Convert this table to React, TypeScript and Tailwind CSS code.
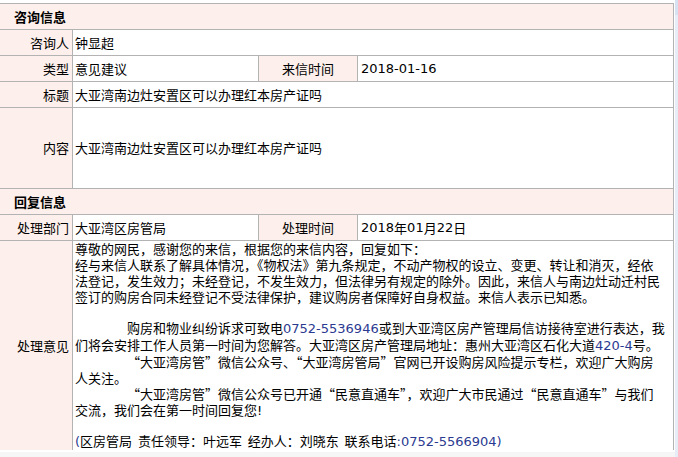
import React from "react";

const N = ({ children }: { children: React.ReactNode }) => (
  <span className="font-['DejaVu_Sans',sans-serif] text-[#2b3a91]">{children}</span>
);
const D = ({ children }: { children: React.ReactNode }) => (
  <span className="font-['DejaVu_Sans',sans-serif]">{children}</span>
);

const Row = ({ h, children, pink }: { h: string; children: React.ReactNode; pink?: boolean }) => (
  <div className={`flex border-b border-[#b3b3b3] ${h} ${pink ? "bg-[#fdf0ec]" : ""}`}>{children}</div>
);

const Label = ({ children }: { children: React.ReactNode }) => (
  <div className="w-[73px] shrink-0 border-r border-[#b3b3b3] bg-[#fdf0ec] flex items-center justify-end pr-[3px]">
    {children}
  </div>
);

export default function App() {
  return (
    <div className="w-[678px] h-[457px] overflow-hidden bg-white flex font-['Noto_Sans_CJK_SC',sans-serif] text-[13px] text-black">
      <div className="w-[675px] shrink-0 flex flex-col">
        <div className="mt-[3px] w-[674px] border-t border-r border-[#b3b3b3]">
          <Row h="h-[26px]" pink>
            <div className="flex items-center pl-[14px] font-bold">咨询信息</div>
          </Row>
          <Row h="h-[26px]">
            <Label>咨询人</Label>
            <div className="flex items-center pl-[2px]">钟显超</div>
          </Row>
          <Row h="h-[26px]">
            <Label>类型</Label>
            <div className="w-[186px] shrink-0 border-r border-[#b3b3b3] flex items-center pl-[2px]">意见建议</div>
            <div className="w-[99px] shrink-0 border-r border-[#b3b3b3] bg-[#fdf0ec] flex items-center justify-center">来信时间</div>
            <div className="flex items-center pl-[3px]"><D>2018-01-16</D></div>
          </Row>
          <Row h="h-[26px]">
            <Label>标题</Label>
            <div className="flex items-center pl-[2px]">大亚湾南边灶安置区可以办理红本房产证吗</div>
          </Row>
          <Row h="h-[81px]">
            <Label>内容</Label>
            <div className="flex items-center pl-[2px]">大亚湾南边灶安置区可以办理红本房产证吗</div>
          </Row>
          <Row h="h-[26px]" pink>
            <div className="flex items-center pl-[14px] font-bold">回复信息</div>
          </Row>
          <Row h="h-[26px]">
            <Label>处理部门</Label>
            <div className="w-[186px] shrink-0 border-r border-[#b3b3b3] flex items-center pl-[2px]">大亚湾区房管局</div>
            <div className="w-[99px] shrink-0 border-r border-[#b3b3b3] bg-[#fdf0ec] flex items-center justify-center">处理时间</div>
            <div className="flex items-center pl-[3px]"><D>2018</D>年<D>01</D>月<D>22</D>日</div>
          </Row>
          <div className="flex h-[209px]">
            <Label>处理意见</Label>
            <div className="pl-[2px] leading-[16px] whitespace-nowrap flex flex-col">
              <div>尊敬的网民，感谢您的来信，根据您的来信内容，回复如下：</div>
              <div>经与来信人联系了解具体情况，《物权法》第九条规定，不动产物权的设立、变更、转让和消灭，经依</div>
              <div>法登记，发生效力；未经登记，不发生效力，但法律另有规定的除外。因此，来信人与南边灶动迁村民</div>
              <div>签订的购房合同未经登记不受法律保护，建议购房者保障好自身权益。来信人表示已知悉。</div>
              <div className="h-[16px]"></div>
              <div className="pl-[52px]">购房和物业纠纷诉求可致电<N>0752-5536946</N>或到大亚湾区房产管理局信访接待室进行表达，我</div>
              <div>们将会安排工作人员第一时间为您解答。大亚湾区房产管理局地址：惠州大亚湾区石化大道<N>420-4</N>号。</div>
              <div className="pl-[52px]">“大亚湾房管”微信公众号、“大亚湾房管局”官网已开设购房风险提示专栏，欢迎广大购房</div>
              <div>人关注。</div>
              <div className="pl-[52px]">“大亚湾房管”微信公众号已开通“民意直通车”，欢迎广大市民通过“民意直通车”与我们</div>
              <div>交流，我们会在第一时间回复您<D>!</D></div>
              <div className="h-[16px]"></div>
              <div className="whitespace-pre"><N>(</N>区房管局  责任领导：叶远军  经办人：刘晓东  联系电话<N>:0752-5566904)</N></div>
            </div>
          </div>
        </div>
        <div className="mt-[2px] flex-1 bg-[#f6f6f6]"></div>
      </div>
      <div className="w-[3px] shrink-0 flex flex-col">
        <div className="h-[15px] bg-[#d6e2f2]"></div>
        <div className="flex-1 bg-[#e6edf7]"></div>
      </div>
    </div>
  );
}
